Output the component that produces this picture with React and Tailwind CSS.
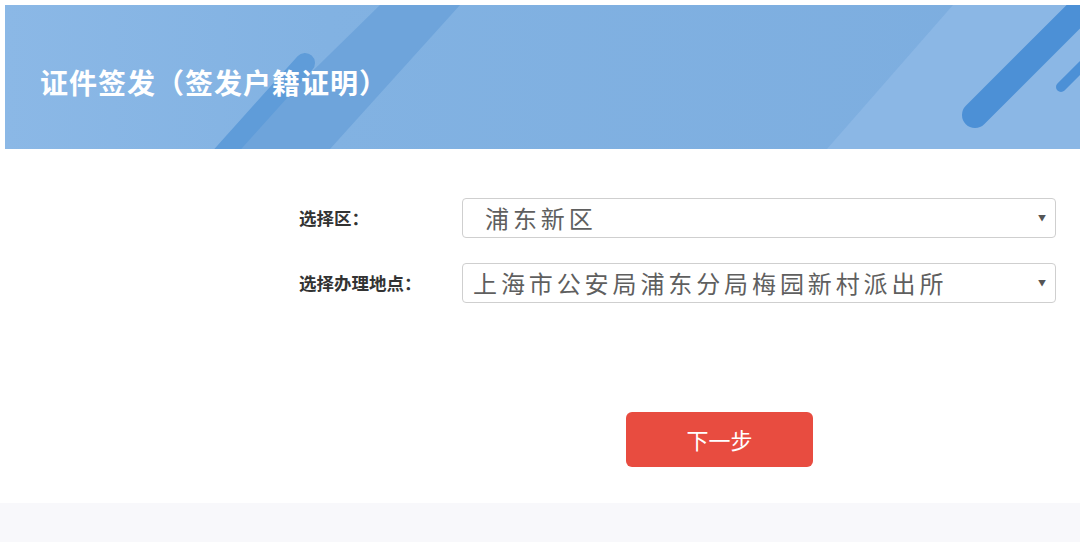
import React from "react";

function Banner() {
  return (
    <div className="relative ml-[5px] mt-[5px] h-[144px] overflow-hidden bg-[#7eaee0]">
      <svg className="absolute inset-0" width="1075" height="144" viewBox="0 0 1075 144">
        <defs>
          <linearGradient id="bg" x1="0" y1="0" x2="1" y2="0">
            <stop offset="0" stopColor="#8bb8e6" />
            <stop offset="0.3" stopColor="#82b2e2" />
            <stop offset="1" stopColor="#7caddf" />
          </linearGradient>
        </defs>
        <rect x="0" y="0" width="1075" height="144" fill="url(#bg)" />
        <polygon points="228,144 325,144 455,0 375,0" fill="#6ea4db" />
        <polygon points="822,144 948,0 1075,0 1075,144" fill="#8bb7e5" />
        <line x1="212" y1="156" x2="300" y2="58" stroke="#5f9cd9" strokeWidth="20" strokeLinecap="round" />
        <line x1="970" y1="110" x2="1100" y2="-20" stroke="#4c90d6" strokeWidth="26" strokeLinecap="round" />
        <line x1="1056" y1="82" x2="1110" y2="28" stroke="#4c90d6" strokeWidth="10" strokeLinecap="round" />
      </svg>
      <div className="relative flex h-full items-center pl-[35px] pt-[10px]">
        <h1 className="text-[28px] font-bold text-white tracking-[1px] [font-family:'Noto_Sans_CJK_SC',sans-serif]">
          证件签发（签发户籍证明）
        </h1>
      </div>
    </div>
  );
}

function SelectRow({ label, value, pl }) {
  return (
    <div className="flex items-center">
      <div className="w-[163px] text-[17.5px] font-bold text-[#333] [font-family:'Noto_Sans_CJK_SC',sans-serif]">
        {label}
      </div>
      <div className="flex h-[40px] w-[594px] items-center justify-between rounded-[4px] border border-[#cfcfcf] bg-white pr-[8px]">
        <span
          className={`${pl} text-[24px] leading-none tracking-[3.9px] text-[#5f5f5f] [font-family:'Noto_Sans_CJK_SC',sans-serif]`}
        >
          {value}
        </span>
        <span className="pr-[1px] text-[8px] text-[#555]">▼</span>
      </div>
    </div>
  );
}

export default function App() {
  return (
    <div className="flex h-[542px] w-[1080px] flex-col bg-white [font-family:'Noto_Sans_CJK_SC',sans-serif]">
      <Banner />
      <div className="flex h-[354px] flex-col pl-[299px] pt-[49px]">
        <div className="flex flex-col gap-[25px]">
          <SelectRow label="选择区：" value="浦东新区" pl="pl-[22px]" />
          <SelectRow label="选择办理地点：" value="上海市公安局浦东分局梅园新村派出所" pl="pl-[10px]" />
        </div>
        <div className="mt-[109px] pl-[327px]">
          <button className="flex h-[55px] w-[187px] items-center justify-center rounded-[6px] bg-[#e84c40] text-[22px] text-white [font-family:'Noto_Sans_CJK_SC',sans-serif]">
            下一步
          </button>
        </div>
      </div>
      <div className="flex-1 bg-[#f8f8fb]" />
    </div>
  );
}
